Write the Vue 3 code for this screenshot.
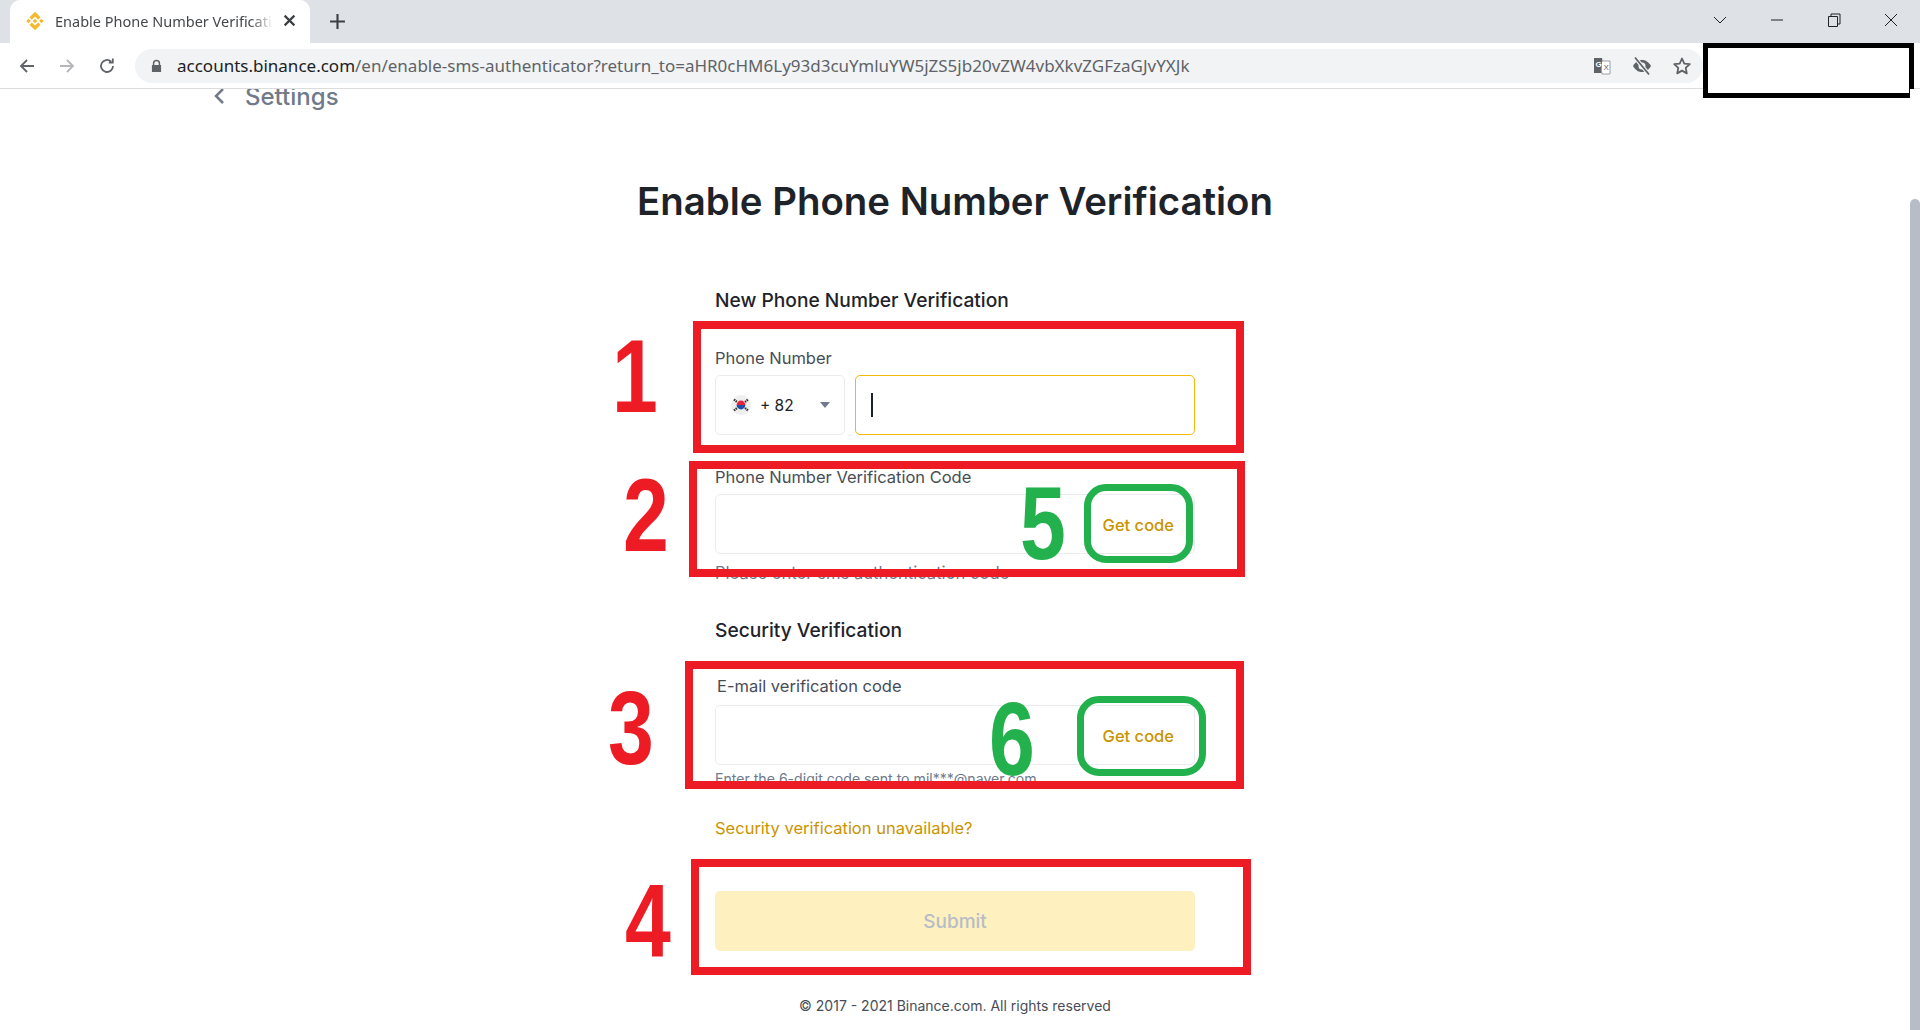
<script setup>
const pins = [
  { n: '1', left: 612, top: 330, color: 'red' },
  { n: '2', left: 623, top: 469, color: 'red' },
  { n: '3', left: 608, top: 682, color: 'red' },
  { n: '4', left: 625, top: 875, color: 'red' },
  { n: '5', left: 1020, top: 477, color: 'green' },
  { n: '6', left: 989, top: 693, color: 'green' },
];
const boxes = [
  { left: 693, top: 321, width: 551, height: 132, cls: 'red-box' },
  { left: 689, top: 461, width: 556, height: 116, cls: 'red-box' },
  { left: 685, top: 661, width: 559, height: 128, cls: 'red-box' },
  { left: 691, top: 859, width: 560, height: 116, cls: 'red-box' },
  { left: 1084, top: 484, width: 109, height: 79, cls: 'green-box' },
  { left: 1077, top: 696, width: 129, height: 80, cls: 'green-box' },
];
</script>

<template>
  <div class="browser">
    <div class="tabbar">
      <div class="tab">
        <svg class="favicon" viewBox="0 0 24 24" fill="#f3ba2f">
          <path d="M12 2 18 8 15.500 10.500 12 7 8.500 10.500 6 8ZM12 22 18 16 15.500 13.500 12 17 8.500 13.500 6 16ZM12 9.500 14.500 12 12 14.500 9.500 12ZM5 9.500 7.500 12 5 14.500 2.500 12ZM19 9.500 21.500 12 19 14.500 16.500 12Z" />
        </svg>
        <span class="tab-title">Enable Phone Number Verification</span>
        <svg class="tab-close" viewBox="0 0 12 12"><path d="M1.500 1.500 10.500 10.500M10.500 1.500 1.500 10.500" /></svg>
      </div>
      <svg class="new-tab" viewBox="0 0 16 16"><path d="M8 1V15M1 8H15" /></svg>
      <div class="win-controls">
        <svg class="win-icon" viewBox="0 0 14 14"><path d="M1 4 7 10 13 4" /></svg>
        <svg class="win-icon" viewBox="0 0 14 14"><path d="M1 7H13" /></svg>
        <svg class="win-icon" viewBox="0 0 14 14"><path d="M1.500 3.500H10.500V13.500H1.500ZM4 3.500V1H13V11H10.500" /></svg>
        <svg class="win-icon" viewBox="0 0 14 14"><path d="M1 1 13 13M13 1 1 13" /></svg>
      </div>
    </div>
    <div class="toolbar">
      <svg class="nav-icon" viewBox="0 0 18 18"><path d="M16 9H3M9 3 3 9 9 15" stroke="#5f6368" /></svg>
      <svg class="nav-icon" viewBox="0 0 18 18"><path d="M2 9H15M9 3 15 9 9 15" stroke="#b4b6b9" /></svg>
      <svg class="nav-icon" viewBox="0 0 18 18"><path d="M15 9A6 6 0 1 1 13 4.500M14.800 1.500V5.500H10.800" stroke="#5f6368" /></svg>
      <div class="omnibox">
        <svg class="lock" viewBox="0 0 12 14" fill="#5f6368"><path d="M2 6V4.300A4 4 0 0 1 10 4.300V6H11V13.500H1V6ZM3.600 6H8.400V4.300A2.400 2.400 0 0 0 3.600 4.300Z" /></svg>
        <span class="url"><b>accounts.binance.com</b>/en/enable-sms-authenticator?return_to=aHR0cHM6Ly93d3cuYmluYW5jZS5jb20vZW4vbXkvZGFzaGJvYXJk</span>
        <svg class="omni-icon" viewBox="0 0 20 20">
          <path d="M2 2H10L13 17H2Z" fill="#5f6368" />
          <path d="M10 5H18V18H10L9.500 15" fill="#fff" stroke="#9aa0a6" />
          <text x="3.500" y="11" font-size="8" font-weight="700" fill="#fff" font-family="Liberation Sans, sans-serif">G</text>
          <text x="11.500" y="14" font-size="8" fill="#5f6368" font-family="Liberation Sans, sans-serif">X</text>
        </svg>
        <svg class="omni-icon" viewBox="0 0 20 20">
          <path d="M1 10C4 5 7 4 10 4S16 5 19 10C16 15 13 16 10 16S4 15 1 10Z" fill="#5f6368" />
          <circle cx="10" cy="10" r="3.500" fill="#f1f3f4" />
          <path d="M3 1.500 17 18.500" stroke="#f1f3f4" stroke-width="4" />
          <path d="M3 1.500 17 18.500" stroke="#5f6368" stroke-width="1.800" />
        </svg>
        <svg class="omni-icon" viewBox="0 0 20 20">
          <path d="M10 2.500 12.300 7.600 17.800 8.200 13.700 11.900 14.800 17.400 10 14.600 5.200 17.400 6.300 11.900 2.200 8.200 7.700 7.600Z" fill="none" stroke="#5f6368" stroke-width="1.800" stroke-linejoin="round" />
        </svg>
      </div>
      <div class="blackout"></div>
    </div>

    <div class="page">
      <main class="content">
        <div class="back">
          <svg class="back-icon" viewBox="0 0 12 20"><path d="M10 3 3 10 10 17" /></svg>
          <span>Settings</span>
        </div>
        <h1 class="title">Enable Phone Number Verification</h1>
        <form class="form" @submit.prevent>
          <h2 class="section">New Phone Number Verification</h2>
          <div class="field first">
            <label>Phone Number</label>
            <div class="phone-row">
              <div class="country">
                <svg class="flag" viewBox="0 0 20 20">
                  <circle cx="10" cy="10" r="10" fill="#eeeeee" />
                  <path d="M5.600 10a4.400 4.400 0 0 1 8.800 0Z" fill="#e6223c" />
                  <path d="M5.600 10a4.400 4.400 0 0 0 8.800 0Z" fill="#1d4fa8" />
                  <path d="M3 4.500 6 7M14 7 17 4.500M3 15.500 6 13M14 13 17 15.500" stroke="#333" stroke-width="2.200" stroke-dasharray="1.500 .7" />
                </svg>
                <span class="code">+ 82</span>
                <span class="caret"></span>
              </div>
              <div class="input focused"><span class="cursor"></span></div>
            </div>
          </div>
          <div class="field second">
            <label>Phone Number Verification Code</label>
            <div class="input with-action"><span class="get-code">Get code</span></div>
            <p class="hint">Please enter sms authentication code</p>
          </div>
          <h2 class="section security">Security Verification</h2>
          <div class="field third">
            <label class="mail-label">E-mail verification code</label>
            <div class="input with-action"><span class="get-code">Get code</span></div>
            <p class="hint tight">Enter the 6-digit code sent to mil***@naver.com</p>
          </div>
          <a class="unavailable">Security verification unavailable?</a>
          <button class="submit" disabled>Submit</button>
        </form>
        <footer class="footer">© 2017 - 2021 Binance.com. All rights reserved</footer>
      </main>
      <div class="scrollbar"><div class="thumb"></div></div>
    </div>

    <div
      v-for="(b, i) in boxes"
      :key="'box' + i"
      :class="b.cls"
      :style="{ left: b.left + 'px', top: b.top + 'px', width: b.width + 'px', height: b.height + 'px' }"
    ></div>
    <span
      v-for="p in pins"
      :key="p.n"
      class="pin"
      :class="p.color"
      :style="{ left: p.left + 'px', top: p.top + 'px' }"
    >{{ p.n }}</span>
  </div>
</template>

<style>
html, body { margin: 0; background: #fff; overflow: hidden; }
</style>

<style scoped>
.browser {
  position: relative;
  width: 1920px;
  height: 1030px;
  overflow: hidden;
  font-family: Inter, "Liberation Sans", sans-serif;
  background: #fff;
}
.tabbar {
  height: 43px;
  background: #dee1e6;
  display: flex;
  align-items: flex-end;
  padding-left: 10px;
}
.tab {
  width: 300px;
  height: 43px;
  background: #fff;
  border-radius: 10px 10px 0 0;
  display: flex;
  align-items: center;
  padding: 0 12px 2px 15px;
  box-sizing: border-box;
}
.favicon { width: 22px; height: 22px; flex: none; margin-left: -1px; }
.tab-title {
  margin-left: 9px;
  width: 218px;
  flex: none;
  overflow: hidden;
  white-space: nowrap;
  font-family: "Noto Sans", sans-serif;
  font-size: 14.500px;
  color: #45474a;
  -webkit-mask-image: linear-gradient(to right, #000 90%, transparent);
  mask-image: linear-gradient(to right, #000 90%, transparent);
}
.tab-close { width: 13px; height: 13px; fill: none; stroke: #3c4043; stroke-width: 2; margin-left: 10px; flex: none; }
.new-tab { width: 17px; height: 17px; fill: none; stroke: #3c4043; stroke-width: 2; margin: 0 0 13px 19px; }
.win-controls {
  margin-left: auto;
  align-self: stretch;
  display: flex;
  align-items: center;
  gap: 43px;
  padding-right: 22px;
}
.win-icon { width: 14px; height: 14px; fill: none; stroke: #202124; stroke-width: 1; margin-bottom: 4px; }
.toolbar {
  position: relative;
  height: 46px;
  background: #fff;
  display: flex;
  align-items: center;
  padding-left: 18px;
  border-bottom: 1px solid #dcdcdc;
  box-sizing: border-box;
  gap: 22px;
}
.nav-icon { width: 18px; height: 18px; fill: none; stroke-width: 1.800; flex: none; }
.omnibox {
  height: 34px;
  width: 1568px;
  margin-left: -3px;
  background: #f1f3f4;
  border-radius: 17px;
  display: flex;
  align-items: center;
  padding: 0 11px 0 16px;
  box-sizing: border-box;
}
.lock { width: 11px; height: 14px; flex: none; }
.url {
  margin-left: 15px;
  flex: 1;
  font-family: "Noto Sans", sans-serif;
  font-size: 17px;
  color: #5f6368;
  white-space: nowrap;
  overflow: hidden;
}
.url b { font-weight: 400; color: #202124; }
.omni-icon { width: 20px; height: 20px; flex: none; margin-left: 20px; }
.blackout {
  position: absolute;
  left: 1703px;
  top: 0;
  width: 211px;
  height: 55px;
  border: 5px solid #000;
  background: #fff;
  box-sizing: border-box;
}
.page { display: flex; height: 941px; }
.content { flex: 1; display: flex; flex-direction: column; align-items: center; overflow: hidden; }
.back {
  width: 1700px;
  height: 17px;
  display: flex;
  align-items: flex-end;
  gap: 20px;
  font-size: 24px;
  font-weight: 500;
  line-height: 28px;
  color: #707a8a;
}
.back span { margin-bottom: -5px; }
.back-icon { width: 12px; height: 20px; fill: none; stroke: #707a8a; stroke-width: 2.500; margin-left: 108px; margin-bottom: 0; }
.title {
  margin: 70px 0 0;
  font-size: 38.400px;
  line-height: 50px;
  font-weight: 600;
  color: #1e2329;
}
.form { width: 480px; margin-top: 62px; display: flex; flex-direction: column; }
.section { margin: 0; font-size: 19.200px; line-height: 24px; font-weight: 500; color: #1e2329; }
.field { display: flex; flex-direction: column; position: relative; }
.first { margin-top: 34px; }
.second { margin-top: 30px; }
.third { margin-top: 32px; }
label { font-size: 16.500px; line-height: 24px; color: #474d57; margin-bottom: 5px; }
.mail-label { padding-left: 2px; margin-bottom: 7px; }
.phone-row { display: flex; gap: 10px; }
.phone-row .input { flex: 1; }
.country {
  width: 130px;
  height: 60px;
  box-sizing: border-box;
  border: 1px solid #eaecef;
  border-radius: 5px;
  display: flex;
  align-items: center;
  padding: 0 14px 0 15px;
  flex: none;
}
.flag { width: 20px; height: 20px; flex: none; }
.code { margin-left: 9px; font-size: 15.500px; color: #1e2329; }
.caret {
  margin-left: auto;
  border-left: 5px solid transparent;
  border-right: 5px solid transparent;
  border-top: 6px solid #707a8a;
}
.input {
  height: 60px;
  box-sizing: border-box;
  border: 1px solid #eaecef;
  border-radius: 5px;
  display: flex;
  align-items: center;
}
.focused { border-color: #f0b90b; padding-left: 15px; }
.cursor { width: 2px; height: 24px; background: #1e2329; }
.with-action { justify-content: flex-end; padding: 2px 20px 0 0; }
.get-code { font-size: 16.500px; font-weight: 500; color: #c99400; }
.hint { margin: 9px 0 0; font-size: 16.600px; line-height: 20px; color: #707a8a; }
.hint.tight { margin-top: 4px; font-size: 14.100px; }
.security { margin-top: 35px; }
.unavailable { margin-top: 27px; font-size: 16.500px; line-height: 24px; color: #c99400; }
.submit {
  margin-top: 51px;
  height: 60px;
  border: 0;
  border-radius: 5px;
  background: #fef0bf;
  color: #b7bdc6;
  font-family: inherit;
  font-size: 19px;
  font-weight: 500;
}
.footer { margin-top: 45px; font-size: 14px; line-height: 20px; color: #474d57; }
.scrollbar { width: 10px; background: #fff; position: relative; }
.thumb { position: absolute; left: 0; right: 0; top: 110px; bottom: 0; background: #b7bdc6; border-radius: 5px 5px 0 0; }
.red-box { position: absolute; box-sizing: border-box; border: 8px solid #ed1c24; }
.green-box { position: absolute; box-sizing: border-box; border: 7px solid #22b14c; border-radius: 22px; }
.pin {
  position: absolute;
  font-family: "Liberation Sans", sans-serif;
  font-weight: 700;
  font-size: 103px;
  line-height: 94px;
  transform: scaleX(0.8);
  transform-origin: left top;
}
.pin.red { color: #ed1c24; }
.pin.green { color: #22b14c; }
</style>
